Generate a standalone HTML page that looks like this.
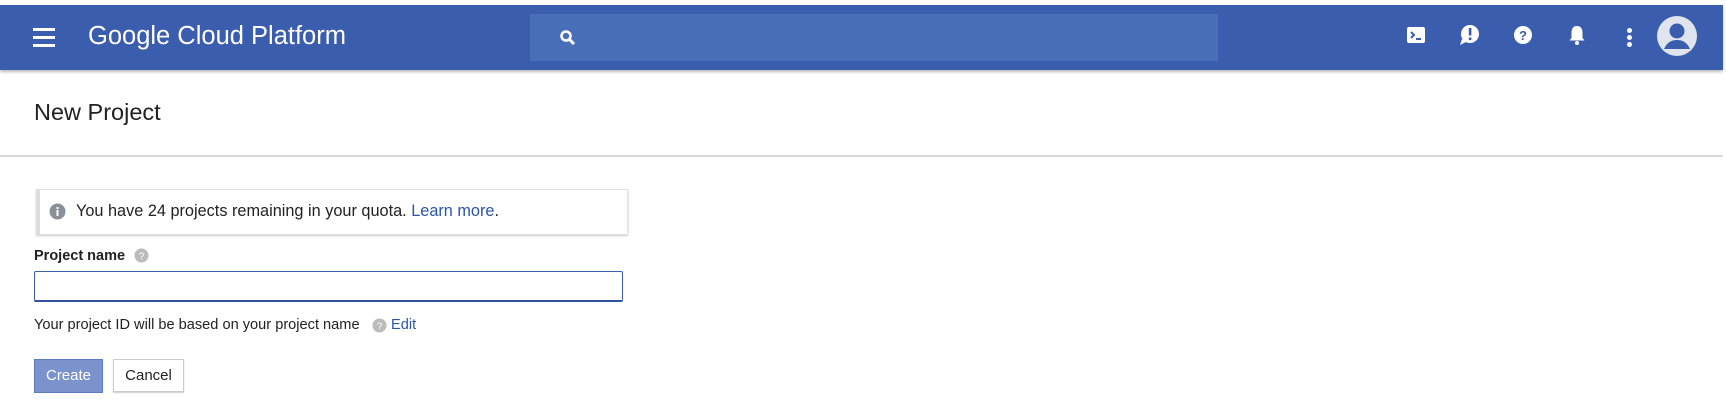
<!DOCTYPE html>
<html><head><style>
body{margin:0;width:1726px;height:417px;background:#fff;font-family:"Liberation Sans",sans-serif;position:relative;overflow:hidden}
.hdr{position:absolute;left:0;top:5px;width:1723px;height:65px;background:#3a5dae;box-shadow:0 2px 3px #bbb}
.abs{position:absolute}
.ham div{width:22px;height:3px;background:#fff;margin-bottom:5px}
</style></head><body>
<div class="hdr">
 <div class="abs ham" style="left:33px;top:23px"><div></div><div></div><div></div></div>
 <div class="abs" style="left:88px;top:17px;color:#fff;font-size:25.5px">Google Cloud Platform</div>
 <div class="abs" style="left:530px;top:9px;width:688px;height:47px;background:#4a6fb9"></div>
 <svg class="abs" style="left:559px;top:24px" width="18" height="18" viewBox="0 0 18 18"><circle cx="7" cy="7" r="4.5" stroke="#fff" stroke-width="2.5" fill="none"/><path d="M10 10l5 5" stroke="#fff" stroke-width="3"/></svg>
 <svg class="abs" style="left:1406px;top:20px" width="20" height="20" viewBox="0 0 20 20"><rect x="1" y="2" width="18" height="16" rx="2" fill="#fff"/><path d="M5 7l3 3-3 3M10 14h5" stroke="#3a5dae" stroke-width="2" fill="none"/></svg>
 <svg class="abs" style="left:1458px;top:19px" width="22" height="22" viewBox="0 0 22 22"><circle cx="12" cy="10" r="9" fill="#fff"/><path d="M4 15l-2 6 6-3z" fill="#fff"/><rect x="10.8" y="4" width="2.6" height="7.5" fill="#3a5dae"/><rect x="10.8" y="13.5" width="2.6" height="2.6" fill="#3a5dae"/></svg>
 <svg class="abs" style="left:1513px;top:20px" width="20" height="20" viewBox="0 0 20 20"><circle cx="10" cy="10" r="9" fill="#fff"/><text x="10" y="15" font-size="13" font-weight="bold" text-anchor="middle" fill="#3a5dae" font-family="Liberation Sans">?</text></svg>
 <svg class="abs" style="left:1568px;top:19px" width="18" height="22" viewBox="0 0 18 22"><path d="M9 2c-4 0-5.5 3-5.5 7v5L1.5 16.5h15L14.5 14V9C14.5 5 13 2 9 2z" fill="#fff"/><circle cx="9" cy="19" r="2" fill="#fff"/></svg>
 <div class="abs" style="left:1627px;top:23px"><div style="width:5px;height:5px;border-radius:50%;background:#fff;margin-bottom:2px"></div><div style="width:5px;height:5px;border-radius:50%;background:#fff;margin-bottom:2px"></div><div style="width:5px;height:5px;border-radius:50%;background:#fff"></div></div>
 <svg class="abs" style="left:1656px;top:10px" width="42" height="42" viewBox="0 0 42 42"><circle cx="21" cy="21" r="20" fill="#dfe4ee"/><circle cx="21" cy="16" r="7.5" fill="#3a5dae"/><path d="M8 34c3-7 8-9 13-9s10 2 13 9" fill="#3a5dae"/></svg>
</div>
<div class="abs" style="left:34px;top:99px;font-size:23.5px;color:#222">New Project</div>
<div class="abs" style="left:0;top:155px;width:1723px;height:2px;background:#d8d8d8"></div>
<div class="abs" style="left:36px;top:189px;width:587px;height:44px;border:1px solid #e0e0e0;border-left:4px solid #ddd;box-shadow:0 1px 2px #ccc"></div>
<svg class="abs" style="left:49px;top:203px" width="17" height="17" viewBox="0 0 17 17"><circle cx="8.5" cy="8.5" r="8" fill="#8a8f9a"/><rect x="7.5" y="7" width="2" height="6" fill="#fff"/><rect x="7.5" y="4" width="2" height="2" fill="#fff"/></svg>
<div class="abs" style="left:76px;top:202px;font-size:16.3px;color:#222">You have 24 projects remaining in your quota. <span style="color:#2b55a8">Learn more</span>.</div>
<div class="abs" style="left:34px;top:248px;font-size:14.5px;font-weight:bold;color:#222">Project name</div>
<svg class="abs" style="left:134px;top:248px" width="15" height="15" viewBox="0 0 15 15"><circle cx="7.5" cy="7.5" r="7" fill="#bbb"/><text x="7.5" y="11.5" font-size="10" text-anchor="middle" fill="#fff" font-family="Liberation Sans">?</text></svg>
<div class="abs" style="left:34px;top:271px;width:587px;height:28px;border:1.5px solid #3a5dae;border-bottom:2.5px solid #2f52a5;border-radius:2px"></div>
<div class="abs" style="left:34px;top:317px;font-size:14.6px;color:#222">Your project ID will be based on your project name</div>
<svg class="abs" style="left:372px;top:318px" width="15" height="15" viewBox="0 0 15 15"><circle cx="7.5" cy="7.5" r="7" fill="#bbb"/><text x="7.5" y="11.5" font-size="10" text-anchor="middle" fill="#fff" font-family="Liberation Sans">?</text></svg>
<div class="abs" style="left:391px;top:317px;font-size:14.6px;color:#2b55a8">Edit</div>
<div class="abs" style="left:34px;top:359px;width:69px;height:34px;background:#7a93cc;border:1px solid #5f7dc0;box-sizing:border-box;color:#fff;font-size:15px;line-height:32px;text-align:center">Create</div>
<div class="abs" style="left:113px;top:359px;width:71px;height:33px;background:#fff;border:1px solid #ccc;box-shadow:0 1px 1px #ccc;box-sizing:border-box;color:#222;font-size:15px;line-height:31px;text-align:center">Cancel</div>
</body></html>
